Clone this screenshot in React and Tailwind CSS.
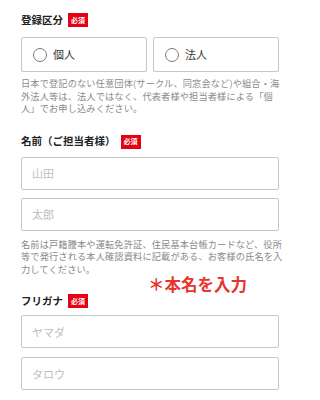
import { useState } from 'react';

const FONT = { fontFamily: '"Noto Sans CJK JP", "Noto Sans", sans-serif' };

function Required() {
  return (
    <span className="inline-flex items-center justify-center w-[20px] h-[14px] bg-[#e50012] text-white text-[7px] font-bold leading-none">
      必須
    </span>
  );
}

function Label({ children }) {
  return (
    <div className="flex items-center gap-[5px] h-[12px]">
      <span className="text-[10.5px] font-bold text-[#222] leading-none">{children}</span>
      <Required />
    </div>
  );
}

function Radio({ label, checked, onClick }) {
  return (
    <button
      onClick={onClick}
      className="h-[35px] border border-[#c6c6c6] rounded-[2px] flex items-center gap-[6px] pl-[11px] bg-white"
    >
      <span className="w-[14px] h-[14px] rounded-full border border-[#7a7a7a] flex items-center justify-center">
        {checked && <span className="w-[7px] h-[7px] rounded-full bg-[#333]" />}
      </span>
      <span className="text-[11px] text-[#333] leading-none">{label}</span>
    </button>
  );
}

function TextInput({ placeholder }) {
  return (
    <input
      placeholder={placeholder}
      className="block w-full h-[33px] px-[10px] border border-[#c6c6c6] rounded-[2px] text-[11px] text-[#333] placeholder:text-[#bdbdbd] focus:outline-none"
    />
  );
}

function Note({ lines }) {
  return (
    <p className="text-[9.2px] leading-[12.5px] tracking-[0.15px] text-[#8a8a8a] whitespace-nowrap">
      {lines.map((l, i) => (
        <span key={i} className="block">{l}</span>
      ))}
    </p>
  );
}

export default function App() {
  const [kind, setKind] = useState(null);

  return (
    <div className="w-[300px] h-[400px] overflow-hidden bg-white px-[21px] pt-[14px]" style={FONT}>
      {/* 登録区分 */}
      <Label>登録区分</Label>
      <div className="mt-[11px] grid grid-cols-2 gap-[6px]">
        <Radio label="個人" checked={kind === 'p'} onClick={() => setKind('p')} />
        <Radio label="法人" checked={kind === 'c'} onClick={() => setKind('c')} />
      </div>
      <div className="mt-[5px]">
        <Note
          lines={[
            '日本で登記のない任意団体(サークル、同窓会など)や組合・海',
            '外法人等は、法人ではなく、代表者様や担当者様による「個',
            '人」でお申し込みください。',
          ]}
        />
      </div>

      {/* 名前 */}
      <div className="mt-[21px]">
        <Label>名前（ご担当者様）</Label>
      </div>
      <div className="mt-[9px] flex flex-col gap-[8px]">
        <TextInput placeholder="山田" />
        <TextInput placeholder="太郎" />
      </div>
      <div className="mt-[7px]">
        <Note
          lines={[
            '名前は戸籍謄本や運転免許証、住民基本台帳カードなど、役所',
            '等で発行される本人確認資料に記載がある、お客様の氏名を入',
            '力してください。',
          ]}
        />
      </div>
      <div className="pl-[127px] text-[16.5px] leading-[18px] font-bold text-[#e8342b] whitespace-nowrap">
        ＊本名を入力
      </div>

      {/* フリガナ */}
      <div className="mt-[2px]">
        <Label>フリガナ</Label>
      </div>
      <div className="mt-[8px] flex flex-col gap-[9px]">
        <TextInput placeholder="ヤマダ" />
        <TextInput placeholder="タロウ" />
      </div>
    </div>
  );
}
